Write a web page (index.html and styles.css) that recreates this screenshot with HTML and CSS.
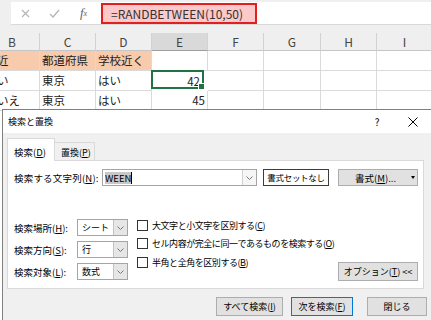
FILE: index.html
```html
<!DOCTYPE html>
<html lang="ja">
<head>
  <meta charset="UTF-8">
  <link rel="stylesheet" href="styles.css">
</head>
<body>
  <div class="fbar">
    <div class="fbar-in">
      <span class="ficon"><svg width="9" height="9"><path d="M1 1L8 8M8 1L1 8" stroke="#b4b4b4" stroke-width="1.2"/></svg></span>
      <span class="ficon"><svg width="11" height="9"><path d="M1 5L4 8L10 1" stroke="#b4b4b4" fill="none" stroke-width="1.2"/></svg></span>
      <span class="ficon fx">f<small>x</small></span>
      <div class="formula">=RANDBETWEEN(10,50)</div>
    </div>
  </div>
  <div class="grid">
    <div class="hd first">B</div><div class="hd">C</div><div class="hd">D</div><div class="hd on">E</div>
    <div class="hd">F</div><div class="hd">G</div><div class="hd">H</div><div class="hd">I</div>

    <div class="c b or">近</div><div class="c or">都道府県</div><div class="c or">学校近く</div><div class="c"></div>
    <div class="c"></div><div class="c"></div><div class="c"></div><div class="c"></div>

    <div class="c b">い</div><div class="c">東京</div><div class="c">はい</div><div class="c num sel"><span>42</span></div>
    <div class="c"></div><div class="c"></div><div class="c"></div><div class="c"></div>

    <div class="c b">いえ</div><div class="c">東京</div><div class="c">はい</div><div class="c num"><span>45</span></div>
    <div class="c"></div><div class="c"></div><div class="c"></div><div class="c"></div>
  </div>

  <div class="dialog">
    <div class="titlebar">
      <span class="title">検索と置換</span>
      <span class="help">?</span>
      <span class="close"><svg width="10" height="10"><path d="M0.5 0.5L9.5 9.5M9.5 0.5L0.5 9.5" stroke="#000" stroke-width="1"/></svg></span>
    </div>
    <div class="body">
      <div class="tabs">
        <div class="tab on">検索(<u>D</u>)</div>
        <div class="tab">置換(<u>P</u>)</div>
      </div>
      <div class="panel">
        <div class="findrow">
          <span class="lbl">検索する文字列(<u>N</u>):</span>
          <div class="combo">
            <span class="val"><span class="hl">WEEN</span><span class="caret"></span></span>
            <span class="drop"><svg width="7" height="4"><path d="M0.5 0.5L3.5 3.5L6.5 0.5" stroke="#777" fill="none"/></svg></span>
          </div>
          <div class="preview">書式セットなし</div>
          <div class="btn fmt"><span>書式(<u>M</u>)...</span><span class="tri"></span></div>
        </div>
        <div class="opts">
          <div class="selects">
            <div class="selrow">
              <span class="lbl2">検索場所(<u>H</u>):</span>
              <div class="sel"><span class="v">シート</span><span class="drop"><svg width="7" height="4"><path d="M0.5 0.5L3.5 3.5L6.5 0.5" stroke="#777" fill="none"/></svg></span></div>
            </div>
            <div class="selrow">
              <span class="lbl2">検索方向(<u>S</u>):</span>
              <div class="sel"><span class="v">行</span><span class="drop"><svg width="7" height="4"><path d="M0.5 0.5L3.5 3.5L6.5 0.5" stroke="#777" fill="none"/></svg></span></div>
            </div>
            <div class="selrow">
              <span class="lbl2">検索対象(<u>L</u>):</span>
              <div class="sel"><span class="v">数式</span><span class="drop"><svg width="7" height="4"><path d="M0.5 0.5L3.5 3.5L6.5 0.5" stroke="#777" fill="none"/></svg></span></div>
            </div>
          </div>
          <div class="checks">
            <div class="chk"><span class="box"></span>大文字と小文字を区別する(<u>C</u>)</div>
            <div class="chk"><span class="box"></span>セル内容が完全に同一であるものを検索する(<u>O</u>)</div>
            <div class="chk"><span class="box"></span>半角と全角を区別する(<u>B</u>)</div>
          </div>
          <div class="btn optbtn">オプション(<u>T</u>) &lt;&lt;</div>
        </div>
      </div>
      <div class="actions">
        <div class="btn act w1">すべて検索(<u>I</u>)</div>
        <div class="btn act w2 def">次を検索(<u>F</u>)</div>
        <div class="btn act w3">閉じる</div>
      </div>
    </div>
  </div>
</body>
</html>
```

FILE: styles.css
```css
body {
  margin: 0;
  width: 431px;
  height: 320px;
  overflow: hidden;
  position: relative;
  background: #fff;
  font-family: "Noto Sans CJK JP", sans-serif;
  color: #222;
}

/* formula bar */
.fbar {
  height: 33px;
  box-sizing: border-box;
  padding: 2px 0 0 11px;
  background: #efefef;
}
.fbar-in {
  height: 22px;
  display: flex;
  align-items: center;
  background: #fff;
  border-bottom: 1px solid #d8d8d8;
}
.ficon {
  width: 29px;
  display: flex;
  justify-content: center;
  align-items: center;
}
.fx {
  font-family: "Liberation Serif", serif;
  font-style: italic;
  font-size: 13px;
  color: #666;
}
.fx small { font-size: 8px; }
.formula {
  margin-left: 3px;
  width: 156px;
  height: 21px;
  box-sizing: border-box;
  border: 2px solid #e41e1e;
  background: #fbc9c9;
  padding-left: 8px;
  font-size: 12px;
  line-height: 17px;
  color: #333;
}

/* cells */
.grid {
  display: grid;
  grid-template-columns: 40px 56px 56px 56px 56px 57px 56px 56px;
  grid-auto-rows: 20px;
  grid-template-rows: 18px 20px 20px 20px;
}
.hd {
  background: #efefef;
  border-right: 1px solid #d2d2d2;
  border-bottom: 1px solid #c6c6c6;
  text-align: center;
  font-size: 12px;
  line-height: 17px;
  color: #444;
}
.hd.first { text-align: left; padding-left: 8px; }
.hd.on { background: #d9d9d9; border-bottom-color: #9e9e9e; }
.c {
  border-right: 1px solid #dadada;
  border-bottom: 1px solid #dadada;
  padding-left: 2px;
  font-size: 11.5px;
  line-height: 19px;
  white-space: nowrap;
  overflow: hidden;
}
.c.b { padding-left: 0; text-indent: -3px; }
.c.or { background: #f8cbad; }
.c.num {
  display: flex;
  justify-content: flex-end;
  padding-right: 2px;
}
.c.sel {
  position: relative;
  z-index: 1;
  overflow: visible;
  outline: 2px solid #217346;
  outline-offset: -1px;
}
.c.sel::after {
  content: "";
  position: absolute;
  right: -3px;
  bottom: -3px;
  width: 5px;
  height: 5px;
  background: #217346;
  border: 1px solid #fff;
}

/* dialog */
.dialog {
  position: absolute;
  left: 2px;
  top: 109px;
  width: 428px;
  height: 220px;
  background: #f0f0f0;
  border: 1px solid #808080;
  font-size: 9px;
  color: #000;
}
.titlebar {
  height: 23px;
  display: flex;
  align-items: center;
  padding-left: 5px;
  background: #fff;
}
.help {
  margin-left: auto;
  width: 10px;
  text-align: center;
  font-size: 10px;
}
.close {
  margin-left: 22px;
  margin-right: 9px;
  width: 18px;
  display: flex;
  justify-content: center;
}
.body { padding-top: 5px; }
.tabs {
  display: flex;
  align-items: flex-end;
  height: 23px;
  margin: 0 0 -1px 4px;
  position: relative;
  z-index: 1;
}
.tab {
  height: 18px;
  width: 40px;
  margin-bottom: 1px;
  box-sizing: border-box;
  padding: 3px 0 0 6px;
  line-height: 14px;
  border: 1px solid #d9d9d9;
  border-bottom: none;
  border-left: none;
}
.tab.on {
  height: 23px;
  width: 48px;
  margin-bottom: 0;
  padding: 6px 0 0 6px;
  border-left: 1px solid #d9d9d9;
  background: #fff;
  font-size: 9.5px;
}
.panel {
  margin: 0 7px 0 4px;
  height: 129px;
  box-sizing: border-box;
  padding: 8px 5px 0 6px;
  background: #fff;
  border: 1px solid #d9d9d9;
}
.findrow {
  display: flex;
  align-items: center;
  height: 17px;
}
.lbl { width: 88px; font-size: 9.5px; letter-spacing: 0.2px; }
.combo, .sel {
  height: 17px;
  box-sizing: border-box;
  display: flex;
  border: 1px solid #a5a5a5;
  background: #fff;
}
.combo { width: 155px; }
.val {
  flex: 1;
  display: flex;
  align-items: center;
  padding-left: 2px;
}
.hl {
  background: #c8c8c8;
  font-size: 9.5px;
  line-height: 12px;
}
.caret { width: 1px; height: 12px; background: #000; }
.drop {
  width: 13px;
  display: flex;
  align-items: center;
  justify-content: center;
  border-left: 1px solid #d0d0d0;
  background: #f6f6f6;
}
.sel .drop { background: #e6e6e6; border-left-color: #c4c4c4; }
.preview {
  margin-left: 6px;
  width: 66px;
  height: 17px;
  box-sizing: border-box;
  border: 1px solid #3c3c3c;
  background: #fff;
  text-align: center;
  font-size: 8.5px;
  line-height: 15px;
  letter-spacing: -0.3px;
}
.btn {
  box-sizing: border-box;
  background: #e1e1e1;
  border: 1px solid #adadad;
  text-align: center;
}
.fmt {
  margin-left: 9px;
  width: 80px;
  height: 17px;
  display: flex;
  align-items: center;
  padding: 0 2px 0 16px;
  font-size: 9.5px;
}
.tri {
  margin-left: auto;
  border-left: 2.5px solid transparent;
  border-right: 2.5px solid transparent;
  border-top: 3px solid #000;
}
.opts {
  display: flex;
  margin-top: 33px;
  height: 62px;
}
.selects {
  display: flex;
  flex-direction: column;
  gap: 5px;
}
.selrow {
  display: flex;
  align-items: center;
  height: 17px;
}
.lbl2 { width: 63px; font-size: 9.5px; }
.sel { width: 51px; }
.sel .v { flex: 1; padding-left: 4px; line-height: 15px; }
.checks {
  display: flex;
  flex-direction: column;
  margin: -3px 0 0 9px;
}
.chk {
  height: 18.5px;
  display: flex;
  align-items: center;
  letter-spacing: -0.45px;
  white-space: nowrap;
}
.box {
  width: 11px;
  height: 11px;
  box-sizing: border-box;
  margin-right: 4px;
  border: 1px solid #333;
  background: #fff;
}
.optbtn {
  margin-left: auto;
  align-self: flex-end;
  width: 80px;
  height: 19px;
  line-height: 17px;
}
.actions {
  display: flex;
  justify-content: flex-end;
  margin-top: 8px;
  padding-right: 4px;
}
.act { height: 19px; line-height: 17px; }
.w1 { width: 67px; }
.w2 { width: 62px; margin-left: 8px; }
.w3 { width: 60px; margin-left: 14px; }
.def { border-color: #0078d7; }
```
